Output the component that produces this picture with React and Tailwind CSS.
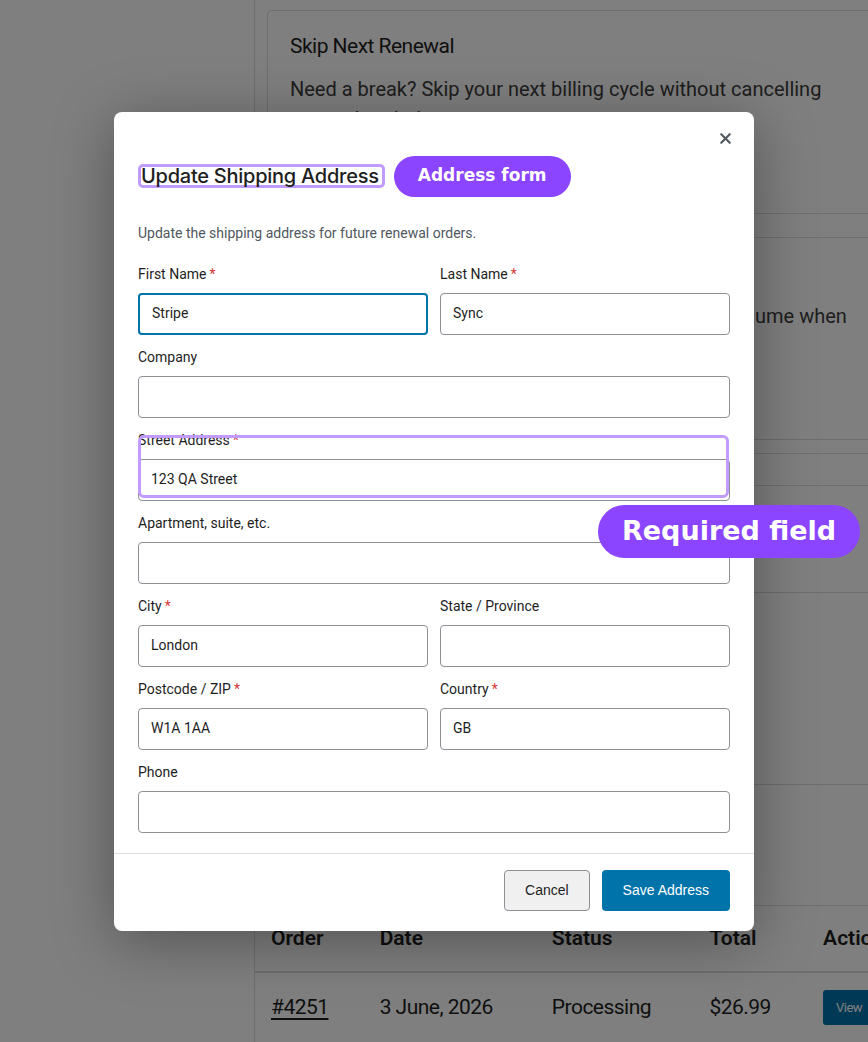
import { X } from "lucide-react";

const sans = { fontFamily: "Roboto, 'Noto Sans', sans-serif" };

function Field({ label, required, value, focused, className = "" }) {
  return (
    <div className={className}>
      <label className="block text-[14px] leading-5 text-[#1e1e1e] mb-[9px]">
        {label}
        {required && <span className="text-[#d63638] ml-[3px]">*</span>}
      </label>
      <div
        className={
          "h-[42px] rounded-[4px] bg-white flex items-center px-[12px] text-[14px] text-[#1e1e1e] " +
          (focused ? "border-2 border-[#0073aa] px-[11px]" : "border border-[#8c8f94]")
        }
      >
        {value}
      </div>
    </div>
  );
}

function BackgroundPage() {
  return (
    <div className="min-h-[1042px] bg-white flex text-[#1e1e1e]" style={sans}>
      <aside className="w-[254px] shrink-0" />
      <main className="flex-1 border-l border-[#dcdcde] pt-[10px] flex flex-col">
        <section className="ml-[12px] border border-[#dcdcde] rounded-[4px] px-[22px] pt-[20px] h-[204px]">
          <h3 className="text-[21px] tracking-tight">Skip Next Renewal</h3>
          <p className="mt-[11px] text-[20px] leading-[30px] text-[#3c3c3c] whitespace-nowrap">
            Need a break? Skip your next billing cycle without cancelling
            <br />
            your subscription.
          </p>
        </section>
        <section className="ml-[12px] mt-[23px] border border-[#dcdcde] rounded-[4px] px-[22px] pt-[20px] h-[203px]">
          <h3 className="text-[21px] tracking-tight">Pause Subscription</h3>
          <p className="mt-[11px] text-[20px] leading-[30px] text-[#3c3c3c] whitespace-nowrap">
            Going on holiday? Pause your deliveries and we'll resume when
            <br />
            you are ready to continue.
          </p>
        </section>
        <section className="ml-[12px] mt-[13px] border border-[#dcdcde] rounded-[4px] h-[140px]">
          <div className="h-[32px] border-b border-[#dcdcde]" />
        </section>
        <section className="ml-[12px] border-x border-b border-[#dcdcde] h-[192px]" />
        <section className="ml-[12px] border-x border-b border-[#dcdcde] h-[121px]" />
        <table className="w-[640px] text-left">
          <thead>
            <tr className="h-[66px] border-b-2 border-[#dcdcde] text-[21px] font-semibold">
              <th className="pl-[16px] font-semibold w-[125px]">Order</th>
              <th className="font-semibold w-[173px]">Date</th>
              <th className="font-semibold w-[158px]">Status</th>
              <th className="font-semibold w-[114px]">Total</th>
              <th className="font-semibold">Actions</th>
            </tr>
          </thead>
          <tbody>
            <tr className="h-[70px] text-[21px] tracking-tight">
              <td className="pl-[16px]">
                <span className="underline underline-offset-4">#4251</span>
              </td>
              <td>3 June, 2026</td>
              <td>Processing</td>
              <td>$26.99</td>
              <td>
                <span className="inline-block bg-[#0073aa] text-white text-[13px] px-[13px] py-[8px] rounded-[3px]">
                  View
                </span>
              </td>
            </tr>
          </tbody>
        </table>
      </main>
    </div>
  );
}

function AddressModal() {
  return (
    <div className="relative w-[640px] bg-white rounded-[8px] shadow-[0_10px_60px_rgba(0,0,0,0.35)]" style={sans}>
      <button className="absolute right-[20px] top-[18px] text-[#50575e]">
        <X size={17} strokeWidth={3} />
      </button>

      <div className="px-[24px] pt-[44px] pb-[20px]">
        <div className="flex items-center gap-[9px]">
          <h2
            className="text-[20px] leading-[18px] font-medium tracking-[-0.25px] text-[#1e1e1e] border-[3px] border-[#c19bff] rounded-[5px] pr-[3px]"
            style={{ fontFamily: "Inter, sans-serif" }}
          >
            Update Shipping Address
          </h2>
          <span
            className="h-[41px] px-[24px] rounded-full bg-[#8b45ff] text-white text-[17px] font-bold flex items-center"
            style={{ fontFamily: "'DejaVu Sans', sans-serif" }}
          >
            Address form
          </span>
        </div>

        <p className="mt-[26px] text-[14px] text-[#50575e]">
          Update the shipping address for future renewal orders.
        </p>

        <div className="mt-[20px] grid grid-cols-2 gap-x-[12px] gap-y-[12px]">
          <Field label="First Name" required value="Stripe" focused />
          <Field label="Last Name" required value="Sync" />
          <Field label="Company" className="col-span-2" />
          <div className="relative col-span-2">
            <Field label="Street Address" required value="123 QA Street" />
            <div className="absolute left-0 right-[1px] top-[5px] h-[63px] border-[3px] border-[#c19bff] rounded-[6px]" />
          </div>
          <Field label="Apartment, suite, etc." className="col-span-2" />
          <Field label="City" required value="London" />
          <Field label="State / Province" />
          <Field label="Postcode / ZIP" required value="W1A 1AA" />
          <Field label="Country" required value="GB" />
          <Field label="Phone" className="col-span-2" />
        </div>
      </div>

      <div
        className="border-t border-[#dcdcde] px-[24px] pt-[16px] pb-[20px] flex justify-end gap-[12px] text-[14px]"
        style={{ fontFamily: "'Liberation Sans', Arial, sans-serif" }}
      >
        <button className="h-[41px] px-[20px] rounded-[4px] border border-[#8c8f94] bg-[#f0f0f0] text-[#1e1e1e]">
          Cancel
        </button>
        <button className="h-[41px] px-[21px] rounded-[4px] bg-[#0073aa] text-white">
          Save Address
        </button>
      </div>

      <span
        className="absolute left-[484px] top-[393px] h-[53px] px-[24px] rounded-full bg-[#8b45ff] text-white text-[27px] font-bold flex items-center whitespace-nowrap"
        style={{ fontFamily: "'DejaVu Sans', sans-serif" }}
      >
        Required field
      </span>
    </div>
  );
}

export default function App() {
  return (
    <div className="relative h-[1042px] overflow-hidden">
      <BackgroundPage />
      <div className="absolute inset-0 bg-black/50 flex items-center justify-center">
        <AddressModal />
      </div>
    </div>
  );
}
